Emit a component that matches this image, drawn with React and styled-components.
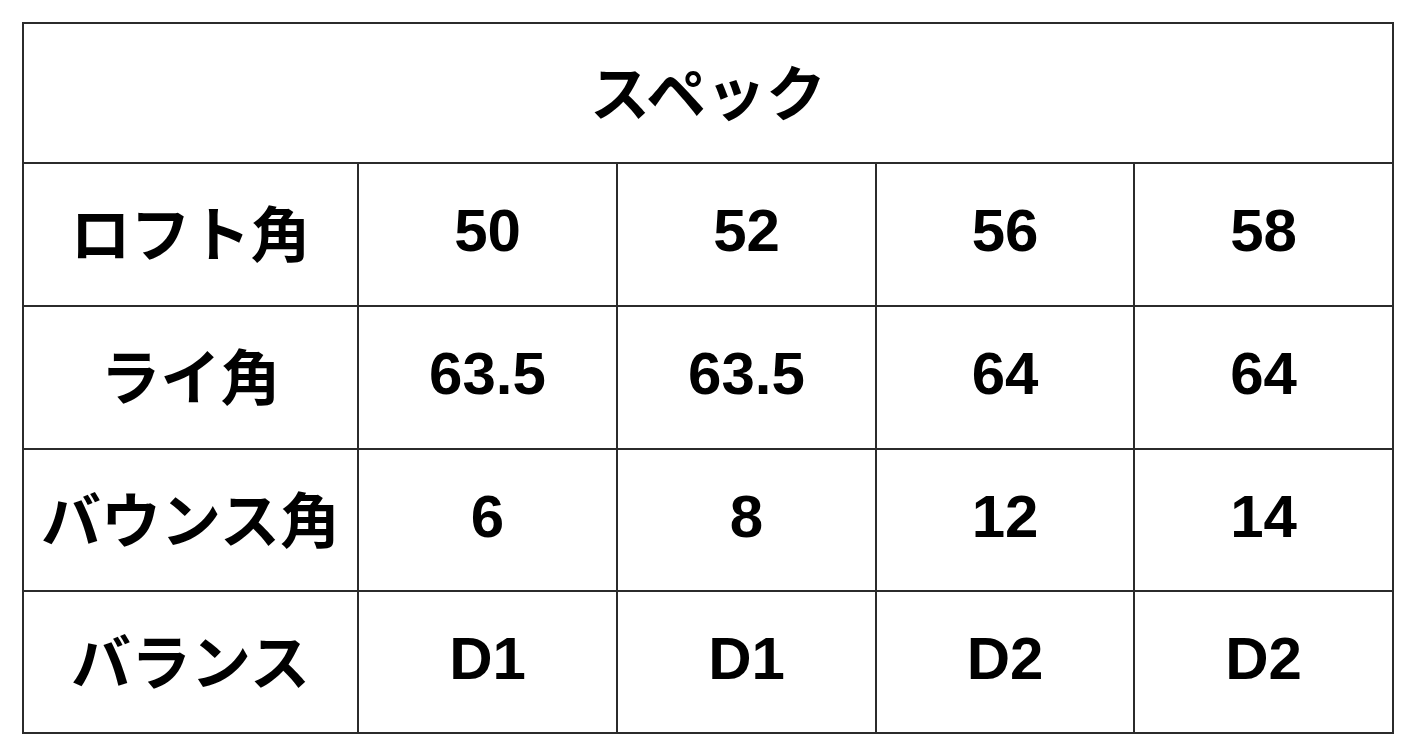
import React from "react";
import styled, { createGlobalStyle } from "styled-components";

const GlobalStyle = createGlobalStyle`
  body {
    margin: 0;
    background: #fff;
    font-family: "Liberation Sans", "Noto Sans CJK JP", sans-serif;
  }
`;

const Page = styled.div`
  padding: 22px;
`;

const Table = styled.div`
  display: grid;
  grid-template-columns: 333px 257px 257px 256px 257px;
  grid-template-rows: 138px 141px 141px 140px 140px;
  gap: 2px;
  padding: 2px;
  width: max-content;
  background: #2b2b2b;
`;

const Cell = styled.div`
  background: #fff;
  display: flex;
  align-items: center;
  justify-content: center;
  padding-bottom: 8px;
  font-size: 60px;
  font-weight: bold;
  color: #000;
  grid-column: ${(p) => (p.span ? "1 / -1" : "auto")};
`;

const rows = [
  ["ロフト角", "50", "52", "56", "58"],
  ["ライ角", "63.5", "63.5", "64", "64"],
  ["バウンス角", "6", "8", "12", "14"],
  ["バランス", "D1", "D1", "D2", "D2"],
];

export default function App() {
  return (
    <>
      <GlobalStyle />
      <Page>
        <Table>
          <Cell span>スペック</Cell>
          {rows.map((row) =>
            row.map((v, i) => <Cell key={row[0] + i}>{v}</Cell>)
          )}
        </Table>
      </Page>
    </>
  );
}
